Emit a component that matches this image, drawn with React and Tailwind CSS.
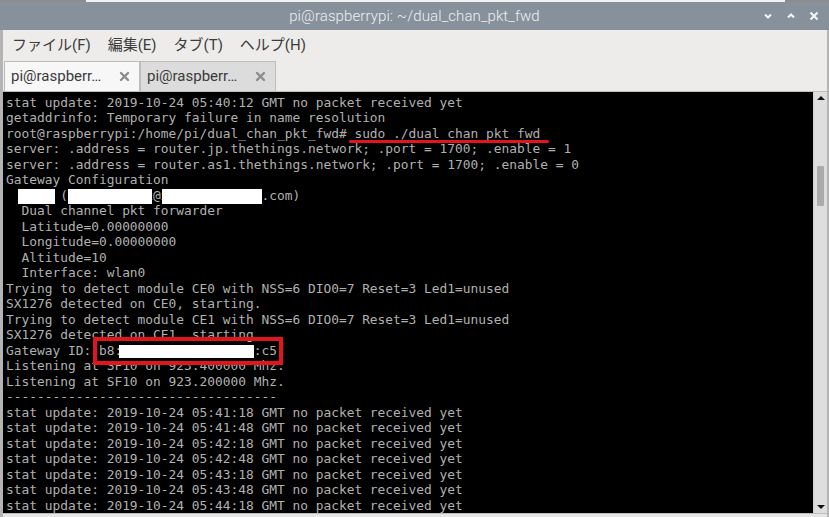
import React from 'react';

const lines = [
  'stat update: 2019-10-24 05:40:12 GMT no packet received yet',
  'getaddrinfo: Temporary failure in name resolution',
  'root@raspberrypi:/home/pi/dual_chan_pkt_fwd# sudo ./dual_chan_pkt_fwd',
  'server: .address = router.jp.thethings.network; .port = 1700; .enable = 1',
  'server: .address = router.as1.thethings.network; .port = 1700; .enable = 0',
  'Gateway Configuration',
  '  xxxx (xxxxxxxxxxx@xxxxxxxxxxxxx.com)',
  '  Dual channel pkt forwarder',
  '  Latitude=0.00000000',
  '  Longitude=0.00000000',
  '  Altitude=10',
  '  Interface: wlan0',
  'Trying to detect module CE0 with NSS=6 DIO0=7 Reset=3 Led1=unused',
  'SX1276 detected on CE0, starting.',
  'Trying to detect module CE1 with NSS=6 DIO0=7 Reset=3 Led1=unused',
  'SX1276 detected on CE1, starting.',
  'Gateway ID: b8:xxxxxxxxxxxxxxxxx:c5',
  'Listening at SF10 on 923.400000 Mhz.',
  'Listening at SF10 on 923.200000 Mhz.',
  '-----------------------------------',
  'stat update: 2019-10-24 05:41:18 GMT no packet received yet',
  'stat update: 2019-10-24 05:41:48 GMT no packet received yet',
  'stat update: 2019-10-24 05:42:18 GMT no packet received yet',
  'stat update: 2019-10-24 05:42:48 GMT no packet received yet',
  'stat update: 2019-10-24 05:43:18 GMT no packet received yet',
  'stat update: 2019-10-24 05:43:48 GMT no packet received yet',
  'stat update: 2019-10-24 05:44:18 GMT no packet received yet',
];

const CloseX = () => (
  <svg width="11" height="11" viewBox="0 0 11 11">
    <path d="M2 2 L9 9 M9 2 L2 9" stroke="#8c8c8c" strokeWidth="2.4" strokeLinecap="round" />
  </svg>
);

const Tab = ({ active }) => (
  <div
    className={
      'w-[136px] h-full flex items-center justify-between pl-[6px] pr-[9px] border border-b-0 border-[#bdbdbd] ' +
      (active ? 'bg-[#f7f7f7]' : 'bg-[#dcdcdc]')
    }
  >
    <span className="text-[15px] text-[#3a3a3a]" style={{ fontFamily: 'Roboto, sans-serif' }}>
      pi@raspberr…
    </span>
    <CloseX />
  </div>
);

export default function App() {
  return (
    <div className="w-[829px] h-[517px] flex flex-col bg-[#d8d8d8] overflow-hidden" style={{ fontFamily: 'Roboto, "Noto Sans CJK JP", sans-serif' }}>
      <div className="h-[2px] flex">
        <div className="w-[86px] bg-[#8d8d8d]" />
        <div className="flex-1 bg-[#f2f2f2]" />
        <div className="w-[44px] bg-[#8d8d8d]" />
      </div>

      {/* title bar */}
      <div className="h-[29px] bg-[#87919b] flex items-center relative">
        <div className="flex-1 text-center text-[15px] text-[#eef0f2] font-light tracking-[0.1px]">
          pi@raspberrypi: ~/dual_chan_pkt_fwd
        </div>
        <div className="absolute right-[10px] top-0 h-full flex items-center gap-[13px]">
          <svg width="10" height="10" viewBox="0 0 10 10">
            <path d="M2 3.5 L5 6.5 L8 3.5" stroke="#f4f4f4" strokeWidth="2" fill="none" />
          </svg>
          <svg width="10" height="10" viewBox="0 0 10 10">
            <path d="M2 6.5 L5 3.5 L8 6.5" stroke="#f4f4f4" strokeWidth="2" fill="none" />
          </svg>
          <svg width="10" height="10" viewBox="0 0 10 10">
            <path d="M1.5 1.5 L8.5 8.5 M8.5 1.5 L1.5 8.5" stroke="#f4f4f4" strokeWidth="2.2" />
          </svg>
        </div>
      </div>

      <div className="flex-1 flex flex-col border-l-[3px] border-r-[2px] border-[#b4b4b4] bg-[#edeceb]">
        {/* menu bar */}
        <div className="h-[31px] flex items-center pl-[9px] gap-[17px] text-[15px] text-[#3c3c3c]">
          <span>ファイル(F)</span>
          <span>編集(E)</span>
          <span>タブ(T)</span>
          <span>ヘルプ(H)</span>
        </div>

        {/* tab bar */}
        <div className="h-[31px] flex pl-[1px] border-b border-[#bdbdbd]">
          <Tab active />
          <Tab />
        </div>

        {/* terminal */}
        <div className="flex-1 flex min-h-0">
          <div className="flex-1 bg-black relative overflow-hidden pl-[3px] pt-[3px]">
            <pre
              className="text-[12.86px] leading-[15.49px] text-[#b0b0b0] m-0"
              style={{ fontFamily: '"DejaVu Sans Mono", monospace' }}
            >
              {lines.join('\n')}
            </pre>

            {/* redactions */}
            <div className="absolute left-[15px] top-[97px] w-[37px] h-[15px] bg-white" />
            <div className="absolute left-[65px] top-[97px] w-[84px] h-[15px] bg-white" />
            <div className="absolute left-[159px] top-[97px] w-[100px] h-[15px] bg-white" />
            <div className="absolute left-[116px] top-[253px] w-[135px] h-[13px] bg-white" />

            {/* annotations */}
            <div className="absolute left-[346px] top-[48px] w-[200px] h-[3px] rounded-full bg-[#e2141d]" />
            <div className="absolute left-[90px] top-[245px] w-[190px] h-[28px] border-[4px] border-[#e2141d]" />
          </div>

          {/* scrollbar */}
          <div className="w-[14px] bg-[#dedede] flex flex-col items-center justify-between py-[3px] border-l border-[#cfcfcf]">
            <div className="flex flex-col items-center w-full">
              <svg width="8" height="6" viewBox="0 0 8 6">
                <path d="M0 5 L4 1 L8 5 Z" fill="#111" />
              </svg>
              <div className="mt-[65px] w-[7px] h-[40px] bg-[#ababab] rounded-[1px]" />
            </div>
            <svg width="8" height="6" viewBox="0 0 8 6">
              <path d="M0 1 L8 1 L4 5 Z" fill="#111" />
            </svg>
          </div>
        </div>

        <div className="h-[4px] bg-[#e6e6e6] border-t border-[#bdbdbd]" />
      </div>
    </div>
  );
}
